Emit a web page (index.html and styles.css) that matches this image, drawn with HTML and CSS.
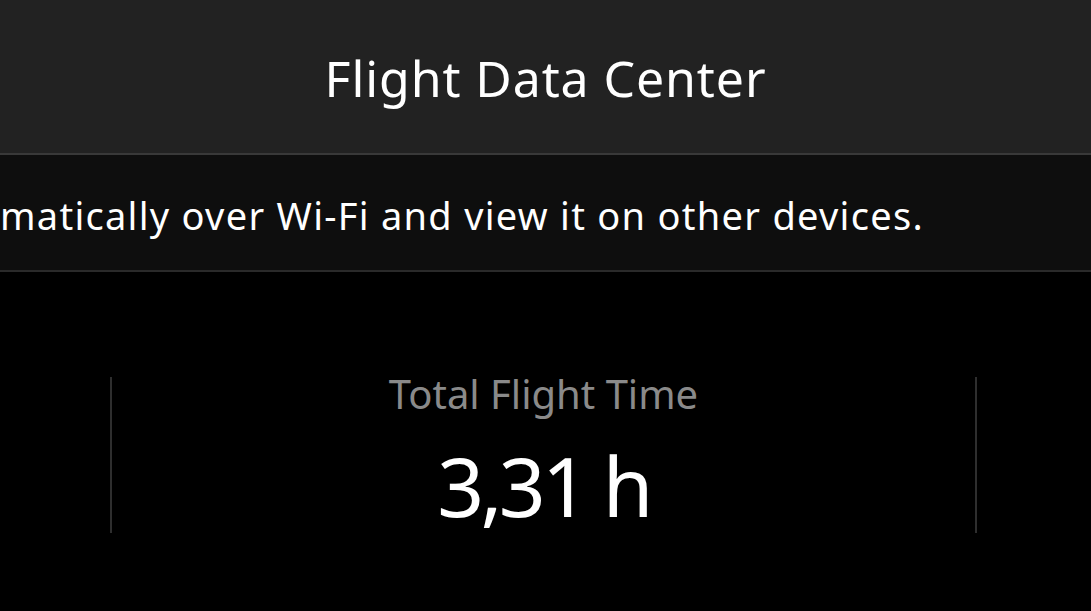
FILE: index.html
```html
<!DOCTYPE html>
<html lang="en">
<head>
    <meta charset="UTF-8">
    <meta name="viewport" content="width=device-width, initial-scale=1.0">
    <title>Flight Data Center</title>
    <link rel="stylesheet" href="styles.css">
</head>
<body>
    <header class="top-bar">
        <h1>Flight Data Center</h1>
    </header>

    <div class="notice">
        <p class="notice-text">matically over Wi-Fi and view it on other devices.</p>
    </div>

    <main class="stats">
        <div class="stat-card">
            <span class="stat-label">Total Flight Time</span>
            <span class="stat-value">3,31 h</span>
        </div>
    </main>
</body>
</html>
```

FILE: styles.css
```css
html, body {
    height: 100%;
}

body {
    font-family: 'Noto Sans', 'Open Sans', sans-serif;
    background-color: #000;
    color: #fff;
    margin: 0;
    padding: 0;
    overflow: hidden;
}

.top-bar {
    background-color: #222;
    height: 155px;
    display: flex;
    justify-content: center;
    align-items: center;
    border-bottom: 2px solid #393939;
    box-sizing: border-box;
}

.top-bar h1 {
    margin: 0;
    font-size: 50px;
    font-weight: 400;
    letter-spacing: 0.9px;
    padding-top: 2px;
}

.notice {
    background-color: #0e0e0e;
    height: 117px;
    border-bottom: 2px solid #2a2a2a;
    box-sizing: border-box;
    display: flex;
    align-items: center;
}

.notice-text {
    margin: 0;
    font-size: 38px;
    letter-spacing: 1.28px;
    white-space: nowrap;
    padding-top: 4px;
}

.stats {
    padding-top: 105px;
    padding-left: 110px;
}

.stat-card {
    width: 867px;
    height: 156px;
    box-sizing: border-box;
    border-left: 2px solid #2e2e2e;
    border-right: 2px solid #2e2e2e;
    display: flex;
    flex-direction: column;
    align-items: center;
}

.stat-label {
    font-size: 40px;
    color: #8a8a8a;
    line-height: 1;
    margin-top: -3px;
}

.stat-value {
    font-size: 82px;
    letter-spacing: -3.7px;
    line-height: 1;
    margin-top: 30px;
}
```
